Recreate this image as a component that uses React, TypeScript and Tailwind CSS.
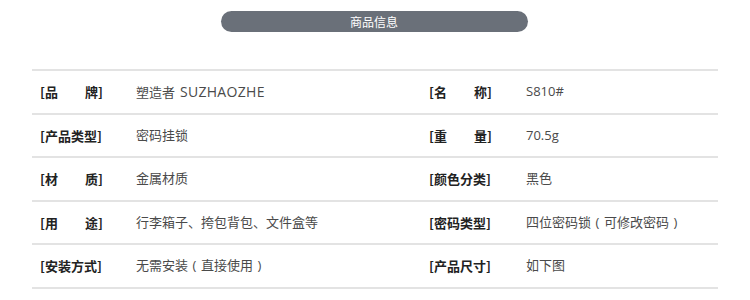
const rows: [string[], string, string[], string][] = [
  [['品', '牌'], '塑造者 SUZHAOZHE', ['名', '称'], 'S810#'],
  [['产品类型'], '密码挂锁', ['重', '量'], '70.5g'],
  [['材', '质'], '金属材质', ['颜色分类'], '黑色'],
  [['用', '途'], '行李箱子、挎包背包、文件盒等', ['密码类型'], '四位密码锁（可修改密码）'],
  [['安装方式'], '无需安装（直接使用）', ['产品尺寸'], '如下图'],
];

function Label({ parts }: { parts: string[] }) {
  return (
    <div className="flex w-[63px] justify-between text-[13px] font-semibold text-[#222]">
      {parts.length === 1 ? (
        <span>[{parts[0]}]</span>
      ) : (
        <>
          <span>[{parts[0]}</span>
          <span>{parts[1]}]</span>
        </>
      )}
    </div>
  );
}

// full-width parens drawn centred in their em box; uppercase latin words a bit larger
function Value({ text }: { text: string }) {
  const bits = text.split(/([（）]| [A-Z]{3,})/);
  return (
    <div
      className="text-[13px] text-[#4a4a4a]"
      style={{ fontFamily: '"Open Sans", "Noto Sans CJK SC", sans-serif' }}
    >
      {bits.map((b, i) => {
        if (b === '（' || b === '）')
          return (
            <span key={i} className="inline-block w-[13px] text-center">
              {b === '（' ? '(' : ')'}
            </span>
          );
        if (/^ [A-Z]{3,}$/.test(b))
          return (
            <span key={i} className="ml-[1px] text-[14px] tracking-[0.3px]">
              {b}
            </span>
          );
        return <span key={i}>{b}</span>;
      })}
    </div>
  );
}

export default function App() {
  return (
    <div
      className="w-[750px] h-[300px] bg-white"
      style={{ fontFamily: '"Noto Sans CJK SC", "Noto Sans", sans-serif' }}
    >
      <div className="pt-[11px] flex justify-center">
        <div className="ml-[-2px] w-[307px] h-[21px] rounded-full bg-[#6a7079] flex items-center justify-center text-[12px] text-white">
          商品信息
        </div>
      </div>

      <div className="mt-[37px] ml-[32px] w-[686px] border-t-2 border-[#e3e3e3]">
        {rows.map(([l1, v1, l2, v2], i) => (
          <div
            key={i}
            className="h-[43.5px] border-b-2 border-[#e3e3e3] grid grid-cols-[104px_293px_97px_1fr] items-center"
          >
            <div className="pl-[8px]">
              <Label parts={l1} />
            </div>
            <Value text={v1} />
            <Label parts={l2} />
            <Value text={v2} />
          </div>
        ))}
      </div>
    </div>
  );
}
